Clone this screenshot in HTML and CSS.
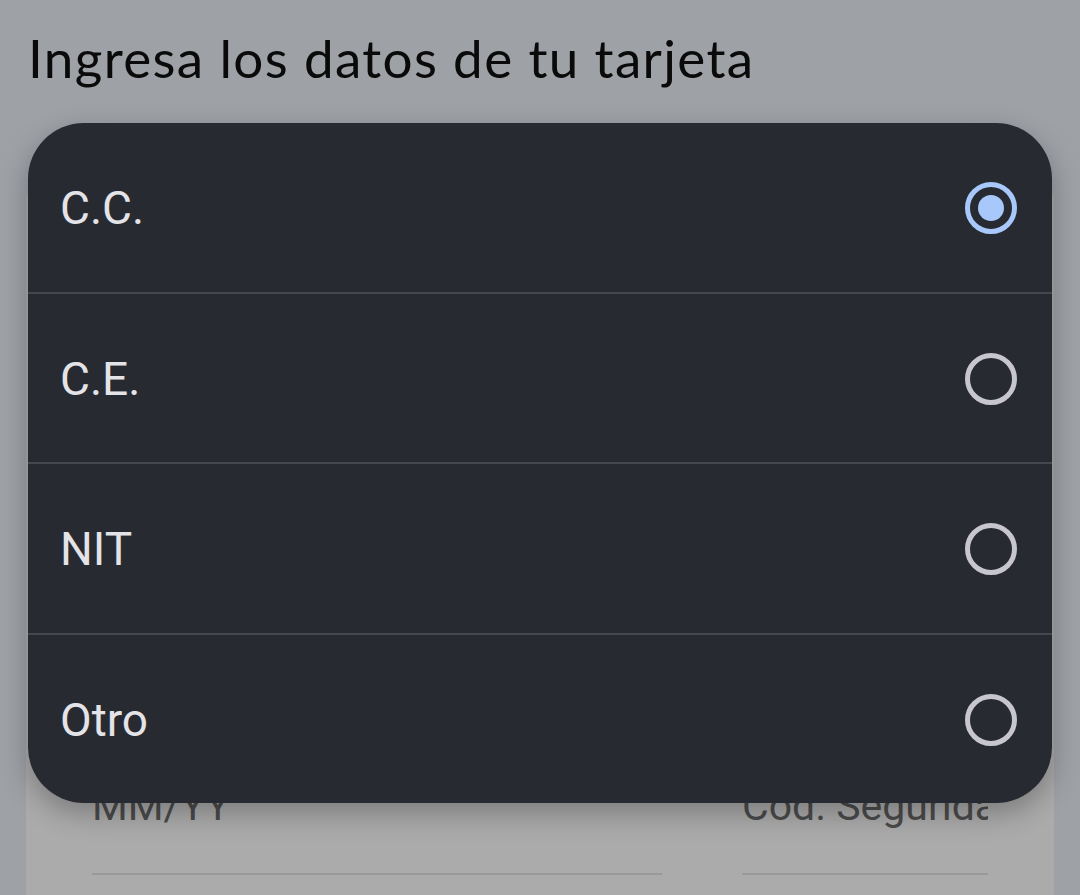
FILE: index.html
```html
<!DOCTYPE html>
<html lang="es">
<head>
<meta charset="utf-8">
<title>Tarjeta</title>
<link rel="stylesheet" href="styles.css">
</head>
<body>
<main class="screen">
  <h1 class="title">Ingresa los datos de tu tarjeta</h1>
  <section class="card">
    <div class="fields">
      <div class="field field-exp">MM/YY</div>
      <div class="field field-cvv">Cód. Seguridad</div>
    </div>
  </section>

  <div class="dialog" role="radiogroup">
    <div class="option">
      <span class="label">C.C.</span>
      <span class="radio selected"></span>
    </div>
    <div class="option">
      <span class="label">C.E.</span>
      <span class="radio"></span>
    </div>
    <div class="option">
      <span class="label">NIT</span>
      <span class="radio"></span>
    </div>
    <div class="option">
      <span class="label">Otro</span>
      <span class="radio"></span>
    </div>
  </div>
</main>
</body>
</html>
```
FILE: styles.css
```css
* { box-sizing: border-box; }

html, body {
  margin: 0;
  padding: 0;
  height: 100%;
  overflow: hidden;
}

body {
  background: #9ea1a6;
  font-family: Roboto, "Liberation Sans", sans-serif;
}

.screen {
  position: relative;
  height: 895px;
  overflow: hidden;
}

.title {
  margin: 0;
  padding: 26px 0 0 28px;
  font-family: Lato, "Open Sans", sans-serif;
  font-weight: 400;
  font-size: 53px;
  line-height: 64px;
  letter-spacing: 1.35px;
  color: #0a0a0a;
}

.card {
  margin: 100px 26px 0 26px;
  height: 705px;
  background: #ababab;
  border-radius: 8px 8px 0 0;
  padding: 589px 0 0 66px;
}

.fields {
  display: flex;
  gap: 80px;
}

.field {
  font-size: 41px;
  line-height: 54px;
  color: #4b4b4b;
  padding-bottom: 40px;
  border-bottom: 2px solid #999999;
  white-space: nowrap;
  overflow: hidden;
}

.field-exp { width: 570px; }
.field-cvv { width: 246px; }

.dialog {
  position: absolute;
  top: 123px;
  left: 28px;
  width: 1024px;
  height: 680px;
  background: #272a30;
  border-radius: 56px;
  box-shadow: 0 10px 28px rgba(0, 0, 0, 0.28);
  display: flex;
  flex-direction: column;
  overflow: hidden;
}

.option {
  flex: 1;
  display: flex;
  align-items: center;
  justify-content: space-between;
  padding: 2px 35px 0 32px;
}

.option + .option {
  border-top: 2px solid #45484e;
}

.label {
  font-size: 46px;
  color: #e3e3e8;
}

.radio {
  width: 52px;
  height: 52px;
  border-radius: 50%;
  border: 5px solid #c6c6cc;
  display: flex;
  align-items: center;
  justify-content: center;
}

.radio.selected {
  border-color: #a8c7fa;
}

.radio.selected::after {
  content: "";
  width: 26px;
  height: 26px;
  border-radius: 50%;
  background: #a8c7fa;
}
```
